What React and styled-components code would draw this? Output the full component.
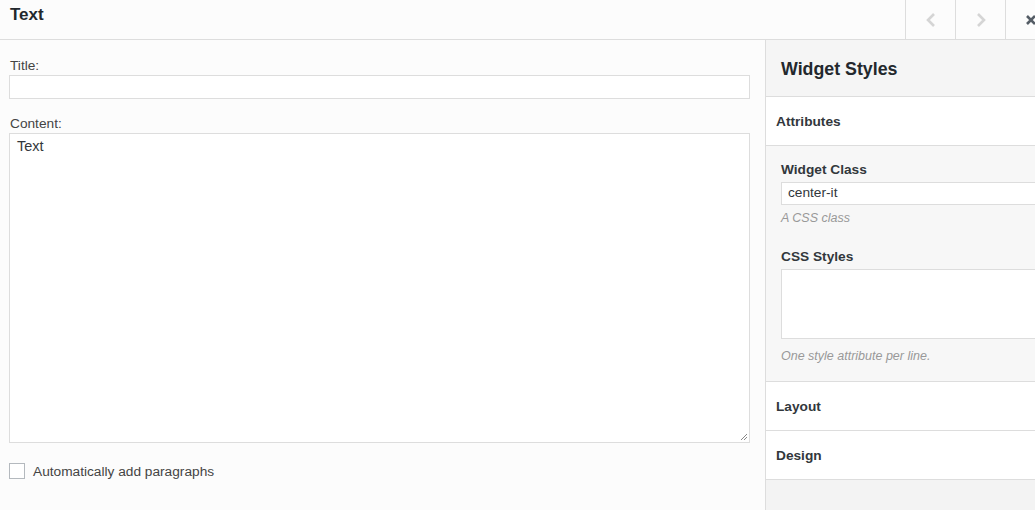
import React from 'react';
import styled, { createGlobalStyle } from 'styled-components';

const GlobalStyle = createGlobalStyle`
  html, body {
    margin: 0;
    padding: 0;
    overflow: hidden;
    background: #fcfcfc;
  }
  body {
    font-family: "Liberation Sans", Arial, sans-serif;
    color: #32373c;
  }
`;

const Frame = styled.div`
  width: 1055px;
  height: 510px;
  display: flex;
  flex-direction: column;
`;

const Header = styled.div`
  height: 39px;
  display: flex;
  align-items: stretch;
  background: #fcfcfc;
  border-bottom: 1px solid #dddddd;
`;

const HeaderTitle = styled.h1`
  flex: 1;
  margin: 0;
  padding-left: 10px;
  font-size: 17px;
  font-weight: 700;
  line-height: 29px;
  color: #23282d;
`;

const NavButton = styled.div`
  width: 49px;
  display: flex;
  align-items: center;
  justify-content: center;
  border-left: 1px solid #dddddd;
  color: ${props => props.color};
`;

const Body = styled.div`
  flex: 1;
  display: flex;
  min-height: 0;
`;

const Main = styled.div`
  width: 766px;
  padding: 18px 15px 0 9px;
  box-sizing: border-box;
  background: #fcfcfc;
  border-right: 1px solid #dddddd;
`;

const FieldLabel = styled.div`
  font-size: 13.7px;
  line-height: 16px;
  margin-bottom: 1px;
  padding-left: 1px;
  color: #444;
`;

const TextInput = styled.div`
  height: 24px;
  box-sizing: border-box;
  border: 1px solid #dddddd;
  background: #fff;
  margin-bottom: 17px;
  font-size: 13.7px;
  line-height: 20px;
  padding: 1px 6px;
  color: #32373c;
`;

const TextArea = styled.div`
  position: relative;
  height: 310px;
  box-sizing: border-box;
  border: 1px solid #dddddd;
  background: #fff;
  font-size: 14.5px;
  line-height: 22px;
  padding: 1px 7px;
  color: #32373c;
`;

const Grip = styled.svg`
  position: absolute;
  right: 1px;
  bottom: 1px;
`;

const CheckRow = styled.label`
  display: flex;
  align-items: center;
  gap: 8px;
  margin-top: 20px;
  font-size: 13.7px;
  color: #444;
`;

const CheckBox = styled.span`
  width: 16px;
  height: 16px;
  box-sizing: border-box;
  border: 1px solid #b4b9be;
  background: #fff;
`;

const Sidebar = styled.div`
  flex: 1;
  background: #f3f3f3;
  display: flex;
  flex-direction: column;
`;

const SidebarTitle = styled.div`
  height: 57px;
  box-sizing: border-box;
  padding: 19px 15px 0;
  font-size: 17.8px;
  font-weight: 700;
  color: #23282d;
  background: #f5f5f5;
  border-bottom: 1px solid #dddddd;
`;

const Section = styled.div`
  height: 49px;
  box-sizing: border-box;
  padding: 0 10px;
  display: flex;
  align-items: center;
  font-size: 13.7px;
  font-weight: 700;
  color: #32373c;
  background: #fff;
  border-bottom: 1px solid #dddddd;
`;

const SectionBody = styled.div`
  height: 236px;
  box-sizing: border-box;
  background: #f7f7f7;
  padding: 16px 0 0 15px;
  border-bottom: 1px solid #dddddd;
`;

const SideLabel = styled.div`
  font-size: 13.7px;
  font-weight: 700;
  line-height: 16px;
  margin-bottom: 4px;
  color: #32373c;
`;

const SideInput = styled.div`
  height: ${props => props.tall ? '70px' : '23px'};
  box-sizing: border-box;
  border: 1px solid #dddddd;
  background: #fff;
  font-size: 13.7px;
  line-height: 20px;
  padding: 0 6px;
  color: #32373c;
`;

const Hint = styled.div`
  font-size: 12.5px;
  font-style: italic;
  line-height: 14px;
  color: #999;
  margin-top: ${props => props.last ? '10px' : '6px'};
  margin-bottom: 24px;
`;

const Chevron = ({ dir }) => (
  <svg width="12" height="16" viewBox="0 0 12 16">
    <path
      d={dir === 'left' ? 'M9 2 L3 8 L9 14' : 'M3 2 L9 8 L3 14'}
      fill="none"
      stroke="currentColor"
      strokeWidth="2.6"
    />
  </svg>
);

const Close = () => (
  <svg width="12" height="12" viewBox="0 0 12 12">
    <path d="M2 2 L10 10 M10 2 L2 10" stroke="currentColor" strokeWidth="2.6" />
  </svg>
);

const App = () => (
  <Frame>
    <GlobalStyle />
    <Header>
      <HeaderTitle>Text</HeaderTitle>
      <NavButton color="#d5d5d5"><Chevron dir="left" /></NavButton>
      <NavButton color="#d5d5d5"><Chevron dir="right" /></NavButton>
      <NavButton color="#555d66"><Close /></NavButton>
    </Header>
    <Body>
      <Main>
        <FieldLabel>Title:</FieldLabel>
        <TextInput />
        <FieldLabel>Content:</FieldLabel>
        <TextArea>
          Text
          <Grip width="8" height="8" viewBox="0 0 8 8">
            <path d="M7 1 L1 7 M7 4 L4 7" stroke="#888" strokeWidth="1" />
          </Grip>
        </TextArea>
        <CheckRow>
          <CheckBox />
          Automatically add paragraphs
        </CheckRow>
      </Main>
      <Sidebar>
        <SidebarTitle>Widget Styles</SidebarTitle>
        <Section>Attributes</Section>
        <SectionBody>
          <SideLabel>Widget Class</SideLabel>
          <SideInput>center-it</SideInput>
          <Hint>A CSS class</Hint>
          <SideLabel>CSS Styles</SideLabel>
          <SideInput tall />
          <Hint last>One style attribute per line.</Hint>
        </SectionBody>
        <Section>Layout</Section>
        <Section>Design</Section>
      </Sidebar>
    </Body>
  </Frame>
);

export default App;
